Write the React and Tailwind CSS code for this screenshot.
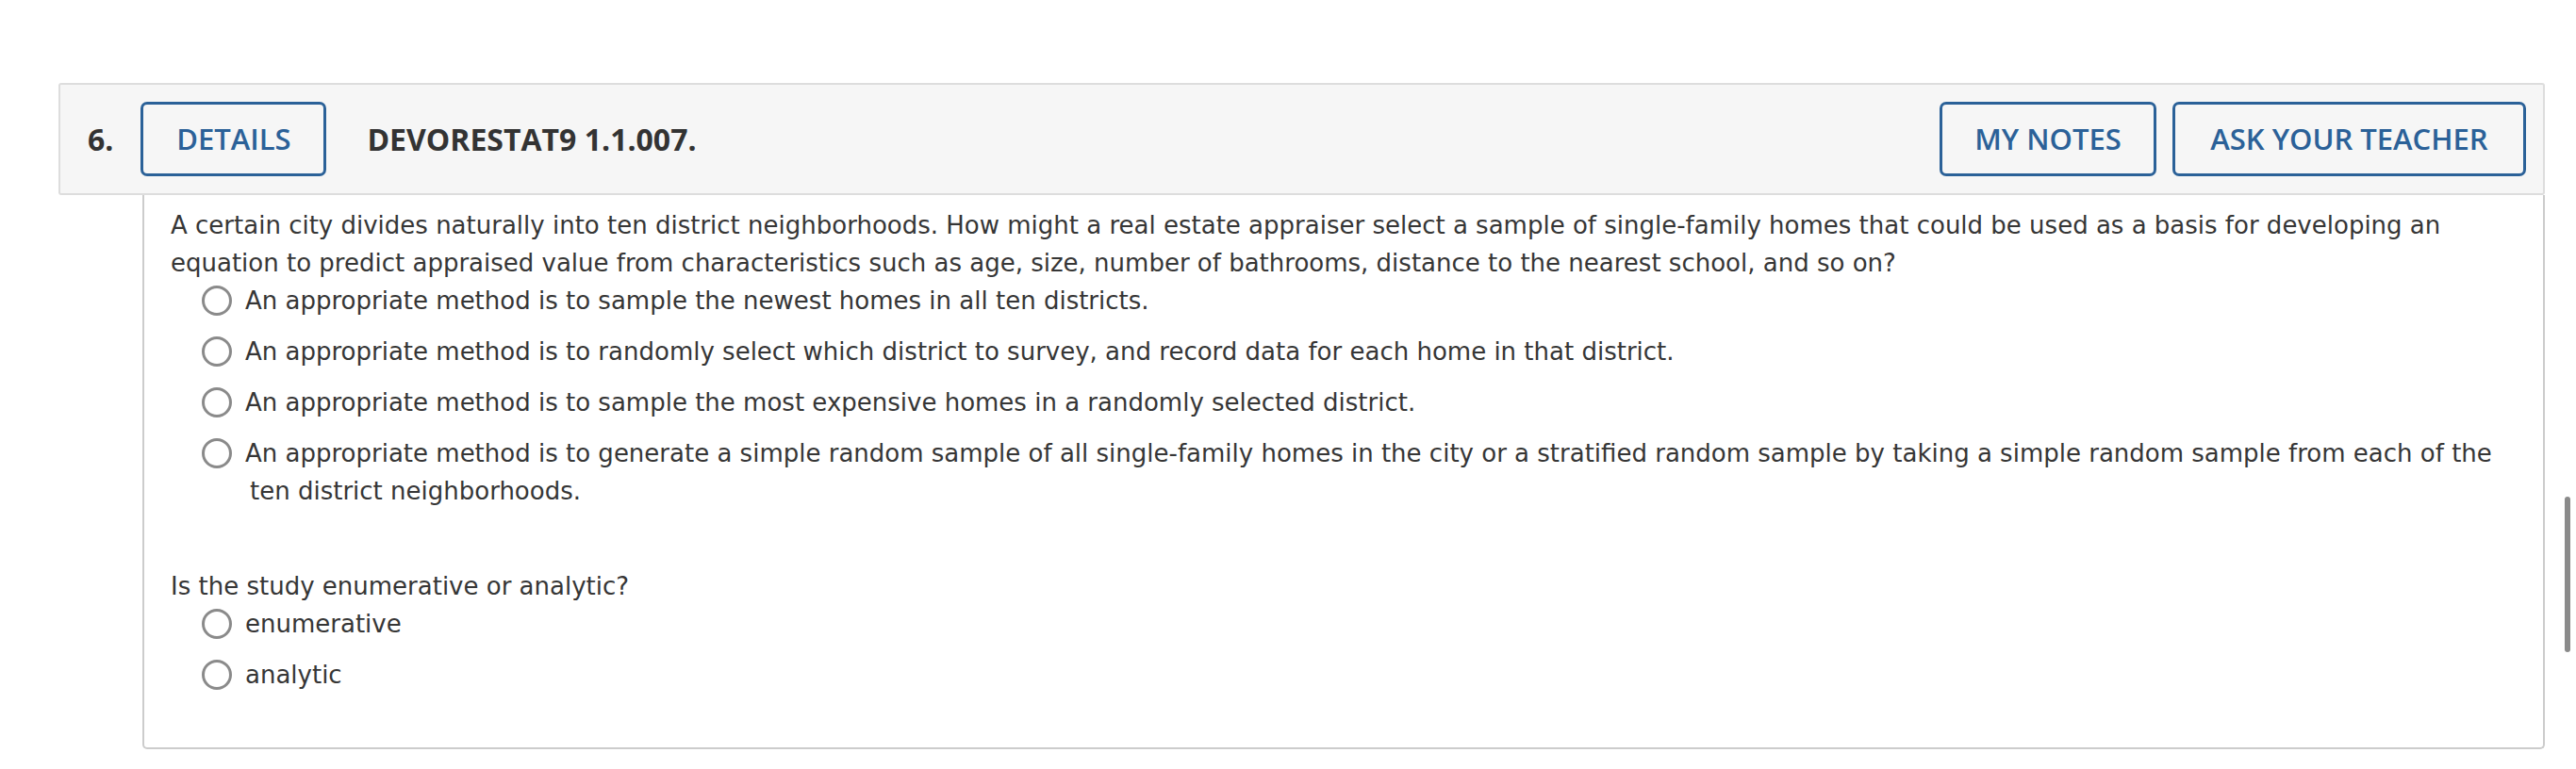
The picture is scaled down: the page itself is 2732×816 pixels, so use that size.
export default function App() {
  const body = "font-['DejaVu_Sans',Verdana,sans-serif] text-[26px] leading-[40px] text-[#363636]";
  const Radio = () => (
    <div className="h-[40px] flex items-center shrink-0">
      <span className="block w-[32px] h-[32px] rounded-full border-[3px] border-[#8a8a8a] bg-white" />
    </div>
  );
  const Option = ({ children, className = "" }) => (
    <div className={"flex items-start pl-[33px] gap-[19px] " + className}>
      <Radio />
      <div className="-indent-[5px]">{children}</div>
    </div>
  );
  const Btn = ({ children, className = "" }) => (
    <button
      className={
        "h-[79px] shrink-0 whitespace-nowrap flex items-center justify-center rounded-[7px] border-[3px] border-[#2b6198] font-['Open_Sans',sans-serif] font-semibold text-[31px] text-[#2b6198] bg-transparent " +
        className
      }
    >
      {children}
    </button>
  );
  return (
    <div className="relative w-[2732px] h-[816px] bg-white overflow-hidden">
      <div className="pt-[88px] pl-[62px] w-[2699px]">
        <div className="flex items-center h-[119px] border-2 border-[#dddddd] bg-[#f6f6f6] rounded-[3px] pl-[29px] pr-[18px]">
          <span className="font-['Open_Sans',sans-serif] font-bold text-[32px] text-[#333333]">6.</span>
          <Btn className="ml-[29px] w-[197px]">DETAILS</Btn>
          <span className="ml-[43px] whitespace-nowrap font-['Open_Sans',sans-serif] font-bold text-[32px] text-[#333333]">
            DEVORESTAT9 1.1.007.
          </span>
          <div className="ml-auto flex gap-[17px]">
            <Btn className="w-[230px]">MY NOTES</Btn>
            <Btn className="w-[375px]">ASK YOUR TEACHER</Btn>
          </div>
        </div>
        <div className={"ml-[89px] h-[588px] border-2 border-t-0 border-[#cccccc] rounded-b-[5px] pt-[12px] pl-[28px] pr-[18px] " + body}>
          <p>
            A certain city divides naturally into ten district neighborhoods. How might a real estate appraiser select a sample of single-family homes that could be used as a basis for developing an equation to predict appraised value from characteristics such as age, size, number of bathrooms, distance to the nearest school, and so on?
          </p>
          <Option className="mb-[14px]">An appropriate method is to sample the newest homes in all ten districts.</Option>
          <Option className="mb-[14px]">An appropriate method is to randomly select which district to survey, and record data for each home in that district.</Option>
          <Option className="mb-[14px]">An appropriate method is to sample the most expensive homes in a randomly selected district.</Option>
          <Option>
            An appropriate method is to generate a simple random sample of all single-family homes in the city or a stratified random sample by taking a simple random sample from each of the ten district neighborhoods.
          </Option>
          <p className="mt-[61px]">Is the study enumerative or analytic?</p>
          <Option className="mb-[14px]">enumerative</Option>
          <Option>analytic</Option>
        </div>
      </div>
      <div className="absolute left-[2720px] top-[527px] w-[6px] h-[165px] rounded-full bg-[#8a8a8a]" />
    </div>
  );
}
